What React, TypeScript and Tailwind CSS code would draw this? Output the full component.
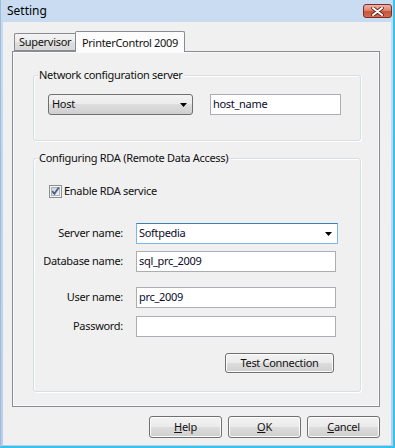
import React from "react";

const Arrow = () => (
  <svg width="7" height="4" viewBox="0 0 7 4" className="shrink-0">
    <path d="M0 0 H7 L3.5 4 Z" fill="#000" />
  </svg>
);

const CheckBox = () => (
  <svg width="13" height="13" viewBox="0 0 13 13" className="shrink-0">
    <defs>
      <linearGradient id="cbg" x1="0" y1="0" x2="1" y2="1">
        <stop offset="0" stopColor="#cbcfd5" />
        <stop offset="1" stopColor="#f6f6f6" />
      </linearGradient>
    </defs>
    <rect x="0.5" y="0.5" width="12" height="12" fill="#f4f4f4" stroke="#8e8f8f" />
    <rect x="2.5" y="2.5" width="8" height="8" fill="url(#cbg)" stroke="#b0b4ba" />
    <path d="M3.2 6.2 L5.4 8.8 L9.8 2.6" stroke="#4a5f8c" strokeWidth="1.8" fill="none" />
  </svg>
);

const Btn = ({ children, w }: { children: React.ReactNode; w: string }) => (
  <div
    className={`${w} h-[22px] flex items-center justify-center rounded-[3px] border border-[#707070] bg-[linear-gradient(#f2f2f2_0%,#ebebeb_50%,#dddddd_50%,#cfcfcf_100%)] shadow-[inset_0_0_0_1px_#fcfcfc]`}
  >
    {children}
  </div>
);

const Input = ({ value, w }: { value: string; w: string }) => (
  <div className={`${w} h-[21px] flex items-center pl-[2px] bg-white border border-[#abadb3] text-[#0a0a2a]`}>
    {value}
  </div>
);

export default function App() {
  return (
    <div className="w-[395px] h-[448px] flex flex-col border-l border-l-[#9fbcdc] border-r-2 border-b-2 border-r-[#35c3ee] border-b-[#35c3ee] bg-[linear-gradient(#c9dcf1,#b7cfe8)] font-['Noto_Sans',sans-serif] text-[11px] tracking-[-0.3px] text-[#111]">
      {/* title bar */}
      <div className="h-[22px] flex items-center justify-between pl-[6px] pr-[1px]">
        <span className="text-[12px] tracking-normal leading-none text-black">Setting</span>
        <div className="w-[29px] h-[14px] rounded-[3px] border border-[#7b2f27] bg-[linear-gradient(#eeb2a4_0%,#dc8672_45%,#c9533a_55%,#d66b4e_100%)] flex items-center justify-center">
          <svg width="13" height="9" viewBox="0 0 13 9">
            <path d="M2 1 L11 8 M11 1 L2 8" stroke="#5a2019" strokeWidth="3.6" strokeLinecap="round" />
            <path d="M2 1 L11 8 M11 1 L2 8" stroke="#ffffff" strokeWidth="2" strokeLinecap="round" />
          </svg>
        </div>
      </div>

      {/* body */}
      <div className="flex-1 ml-[2px] mr-[2px] mb-[1px] bg-[#f0f0f0] flex flex-col pl-[9px] pt-[9px]">
        {/* tabs */}
        <div className="relative z-10 h-[21px] -mb-px flex items-end pl-[2px]">
          <div className="w-[61px] h-[18px] mb-px flex items-center pl-[4px] border border-r-0 border-[#898c95] rounded-tl-[2px] bg-[linear-gradient(#f4f4f4_0%,#ebebeb_50%,#dfdfdf_50%,#d8d8d8_100%)]">
            Supervisor
          </div>
          <div className="w-[110px] h-[21px] flex items-start pt-[3px] pl-[6px] border border-b-0 border-[#898c95] rounded-t-[2px] bg-[#fcfcfc]">
            PrinterControl 2009
          </div>
        </div>

        {/* pane */}
        <div className="w-[368px] h-[356px] border border-[#898c95] bg-[#f0f0f0] pl-[20px] pt-[23px] shadow-[inset_0_0_0_1px_#fafafa]">
          {/* group 1 */}
          <div className="relative w-[328px] h-[66px] rounded-[3px] border border-[#d5dfe5] shadow-[inset_1px_1px_0_#fff,1px_1px_0_#fff] pl-[14px] pt-[18px] flex items-start">
            <span className="absolute left-[4px] -top-[9px] px-[1px] bg-[#f0f0f0] leading-[16px]">
              Network configuration server
            </span>
            <div className="w-[145px] h-[21px] rounded-[3px] border border-[#707070] bg-[linear-gradient(#f2f2f2_0%,#ebebeb_50%,#dddddd_50%,#cfcfcf_100%)] flex items-center justify-between pl-[3px] pr-[5px]">
              <span>Host</span>
              <Arrow />
            </div>
            <div className="ml-[17px]">
              <Input value="host_name" w="w-[131px]" />
            </div>
          </div>

          {/* group 2 */}
          <div className="relative mt-[17px] w-[328px] h-[234px] rounded-[3px] border border-[#d5dfe5] shadow-[inset_1px_1px_0_#fff,1px_1px_0_#fff] pt-[26px] flex flex-col">
            <span className="absolute left-[4px] -top-[9px] px-[1px] bg-[#f0f0f0] leading-[16px]">
              Configuring RDA (Remote Data Access)
            </span>
            <div className="h-[13px] pl-[15px] flex items-center">
              <CheckBox />
              <span className="ml-[2px]">Enable RDA service</span>
            </div>

            <div className="mt-[25px] flex items-center">
              <span className="w-[89px] text-right">Server name:</span>
              <div className="ml-[13px] w-[202px] h-[21px] bg-white border border-[#7eb4ea] border-t-[#3c7fb1] flex items-center justify-between pl-[2px] pr-[5px] text-[#0a0a2a]">
                <span>Softpedia</span>
                <Arrow />
              </div>
            </div>

            <div className="mt-[7px] flex items-center">
              <span className="w-[89px] text-right">Database name:</span>
              <div className="ml-[13px]">
                <Input value="sql_prc_2009" w="w-[200px]" />
              </div>
            </div>

            <div className="mt-[15px] flex items-center">
              <span className="w-[89px] text-right">User name:</span>
              <div className="ml-[13px]">
                <Input value="prc_2009" w="w-[200px]" />
              </div>
            </div>

            <div className="mt-[8px] flex items-center">
              <span className="w-[89px] text-right">Password:</span>
              <div className="ml-[13px]">
                <Input value="" w="w-[200px]" />
              </div>
            </div>

            <div className="mt-[16px] ml-[191px]">
              <div className="w-[109px] h-[20px] flex items-center justify-center rounded-[3px] border border-[#707070] bg-[linear-gradient(#f2f2f2_0%,#ebebeb_50%,#dddddd_50%,#cfcfcf_100%)] shadow-[inset_0_0_0_1px_#fcfcfc]">
                Test Connection
              </div>
            </div>
          </div>
        </div>

        {/* bottom buttons */}
        <div className="w-[368px] mt-[9px] flex justify-end gap-[6px]">
          <Btn w="w-[73px]">
            <span>
              <span className="underline">H</span>elp
            </span>
          </Btn>
          <Btn w="w-[73px]">
            <span>
              <span className="underline">O</span>K
            </span>
          </Btn>
          <Btn w="w-[73px]">
            <span>
              <span className="underline">C</span>ancel
            </span>
          </Btn>
        </div>
      </div>
    </div>
  );
}
